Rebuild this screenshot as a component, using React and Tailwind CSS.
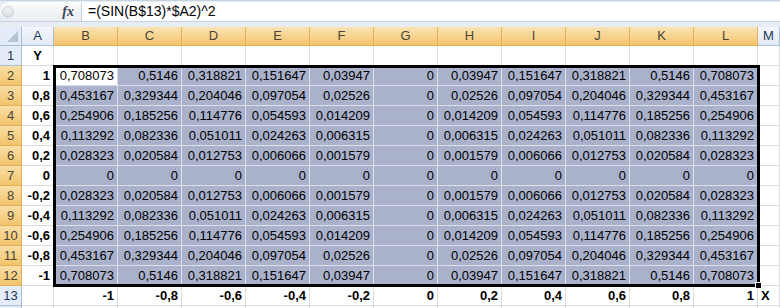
import React from 'react';

const xs = [-1, -0.8, -0.6, -0.4, -0.2, 0, 0.2, 0.4, 0.6, 0.8, 1];
const ys = [1, 0.8, 0.6, 0.4, 0.2, 0, -0.2, -0.4, -0.6, -0.8, -1];
const cols = ['B', 'C', 'D', 'E', 'F', 'G', 'H', 'I', 'J', 'K', 'L'];

const label = (v) => String(v).replace('.', ',');
const fmt = (v) => {
    if (v === 0) return '0';
    return Number(v.toFixed(6)).toString().replace('.', ',');
};

const font = { fontFamily: '"Liberation Sans", Arial, sans-serif' };

const ColHead = ({ children, selected }) => (
    <div
        className={
            selected
                ? 'h-[19px] flex items-center justify-center border-r border-b border-[#e1b25c] bg-gradient-to-b from-[#fae3b4] to-[#f3c46a] text-[13px] text-[#4a4535]'
                : 'h-[19px] flex items-center justify-center border-r border-b border-[#a9bfd6] bg-gradient-to-b from-[#f4f7fb] to-[#e2eaf5] text-[13px] text-[#1e395b]'
        }
    >
        {children}
    </div>
);

const RowHead = ({ children, selected }) => (
    <div
        className={
            selected
                ? 'h-[20px] flex items-center justify-center border-r border-b border-[#e1b25c] bg-gradient-to-b from-[#f9dea6] to-[#f3c46a] text-[13px] text-[#4a4535]'
                : 'h-[20px] flex items-center justify-center border-r border-b border-[#a9bfd6] bg-[#e4ecf7] text-[13px] text-[#1e395b]'
        }
    >
        {children}
    </div>
);

const Cell = ({ children, sel, active, bold, align = 'right' }) => (
    <div
        className={
            'h-[20px] flex items-center border-r border-b px-[3px] text-[13px] text-black ' +
            (align === 'right' ? 'justify-end ' : align === 'center' ? 'justify-center ' : 'justify-start ') +
            (bold ? 'font-bold ' : '') +
            (sel && !active ? 'bg-[#a9b1cb] border-[#dde0ea]' : 'bg-white border-[#dadcdd]')
        }
    >
        {children}
    </div>
);

export default function App() {
    return (
        <div className="relative w-[780px] h-[308px] overflow-hidden bg-white select-none" style={font}>
            {/* formula bar */}
            <div className="h-[27px] bg-[#e8edf3] border-t border-[#c5d2e0] pt-[1px]">
                <div className="flex h-[20px] border-b border-[#c5d2e0]">
                    <div className="relative w-[82px] flex items-center justify-end pr-[7px] rounded-l-[10px] bg-gradient-to-b from-[#fbfcfd] to-[#e9edf1] border-r border-[#c5d2e0]">
                        <div className="absolute left-[2px] top-[4px] w-[12px] h-[12px] rounded-full bg-gradient-to-b from-[#f2f4f7] to-[#d8dde4] border border-[#c9d0d9]" />
                        <span className="text-[14px] italic font-bold text-[#3d4350]" style={{ fontFamily: '"Liberation Serif", serif' }}>
                            fx
                        </span>
                    </div>
                    <div className="flex-1 bg-white flex items-center pl-[6px] text-[14px] text-black">
                        =(SIN(B$13)*$A2)^2
                    </div>
                </div>
            </div>

            {/* sheet grid */}
            <div className="grid grid-cols-[22px_32px_repeat(11,64px)_22px]">
                {/* header row */}
                <div className="h-[19px] relative border-r border-b border-[#a9bfd6] bg-[#e4ecf7]">
                    <svg className="absolute right-[3px] bottom-[3px]" width="11" height="11" viewBox="0 0 11 11">
                        <polygon points="11,0 11,11 0,11" fill="#b6c2d1" />
                    </svg>
                </div>
                <ColHead>A</ColHead>
                {cols.map((c) => (
                    <ColHead key={c} selected>
                        {c}
                    </ColHead>
                ))}
                <ColHead>M</ColHead>

                {/* row 1 */}
                <RowHead>1</RowHead>
                <Cell bold align="center">Y</Cell>
                {cols.map((c) => (
                    <Cell key={c} />
                ))}
                <Cell />

                {/* rows 2-12 */}
                {ys.map((y, ri) => (
                    <React.Fragment key={ri}>
                        <RowHead selected>{ri + 2}</RowHead>
                        <Cell bold>{label(y)}</Cell>
                        {xs.map((x, ci) => (
                            <Cell key={ci} sel active={ri === 0 && ci === 0}>
                                {fmt(Math.pow(Math.sin(x) * y, 2))}
                            </Cell>
                        ))}
                        <Cell />
                    </React.Fragment>
                ))}

                {/* row 13 */}
                <RowHead>13</RowHead>
                <Cell />
                {xs.map((x, ci) => (
                    <Cell key={ci} bold>
                        {label(x)}
                    </Cell>
                ))}
                <Cell bold align="left">X</Cell>

                {/* row 14, only its top edge shows */}
                <RowHead />
                <Cell />
                {xs.map((x, ci) => (
                    <Cell key={ci} />
                ))}
                <Cell />
            </div>

            {/* selection outline + fill handle */}
            <div className="absolute left-[53px] top-[65px] w-[707px] h-[222px] border-[3px] border-black pointer-events-none" />
            <div className="absolute left-[755px] top-[282px] w-[7px] h-[7px] bg-black border border-white pointer-events-none" />
        </div>
    );
}
